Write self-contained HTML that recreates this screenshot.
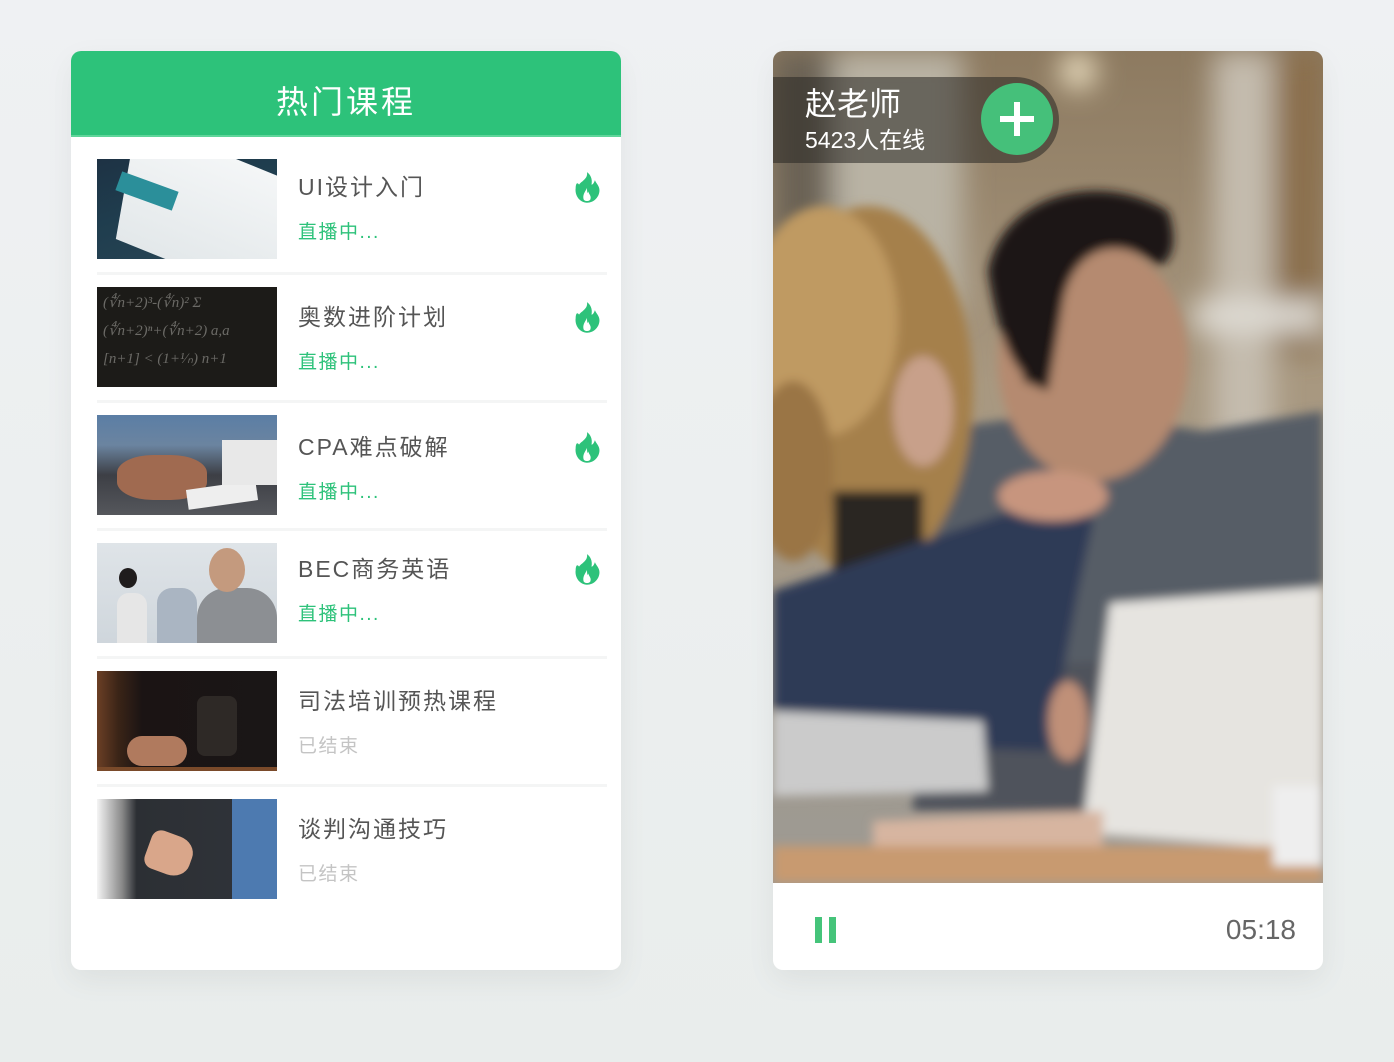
<!DOCTYPE html>
<html><head><meta charset="utf-8"><style>
*{margin:0;padding:0;box-sizing:border-box}
body{width:1394px;height:1062px;background:linear-gradient(180deg,#eff1f3,#e9edec);position:relative;overflow:hidden;font-family:"Liberation Sans","Noto Sans CJK SC",sans-serif}
.card{position:absolute;top:51px;width:550px;height:919px;background:#fff;border-radius:10px;overflow:hidden;box-shadow:0 10px 30px rgba(0,0,0,.06)}
#l{left:71px}#r{left:773px}
.hd{height:86px;background:#2dc27a;color:#fff;font-size:32px;letter-spacing:3px;text-align:center;line-height:102px;border-bottom:2px solid #5fd59a}
.th{position:absolute;left:26px;width:180px;height:100px;overflow:hidden}
.t{position:absolute;left:227px;font-size:23px;color:#555;letter-spacing:2px;line-height:28px;white-space:nowrap}
.s{position:absolute;left:227px;font-size:19px;letter-spacing:1.5px;line-height:24px;color:#2dc27a}
.s.e{color:#c4c4c4}
.sep{position:absolute;left:26px;width:510px;height:3px;background:#f4f5f5}
.fl{position:absolute;left:500px;width:32px;height:34px}
</style></head><body>
<div class="card" id="l">
<div class="hd">热门课程</div>
<div class="th" style="top:108px;background:linear-gradient(160deg,#1e3244 0%,#1f3d4e 40%,#2a4656 100%)">
<div style="position:absolute;top:-40px;width:240px;height:120px;background:linear-gradient(180deg,#f4f6f7,#e3e8ea);transform:skew(-10deg,22deg);transform-origin:0 0;left:40px"></div>
<div style="position:absolute;left:20px;top:22px;width:60px;height:20px;background:#2b8f9a;transform:rotate(20deg)"></div>
</div>
<div class="t" style="top:122px">UI设计入门</div>
<div class="s" style="top:170px">直播中...</div>
<div class="sep" style="top:221px"></div>
<div class="th" style="top:236px;background:#1c1b18;color:#6b6a66;font:italic 15px 'Liberation Serif',serif;line-height:28px;padding:2px 6px;white-space:nowrap">(∜n+2)³-(∜n)² Σ<br>(∜n+2)ⁿ+(∜n+2) a,a<br>[n+1] &lt; (1+¹⁄ₙ) n+1</div>
<div class="t" style="top:252px">奥数进阶计划</div>
<div class="s" style="top:300px">直播中...</div>
<div class="sep" style="top:349px"></div>
<div class="th" style="top:364px;background:linear-gradient(180deg,#5b7ea5 0%,#6b84a0 30%,#3d3f45 60%,#55575c 100%)">
<div style="position:absolute;left:20px;top:40px;width:90px;height:45px;border-radius:40%;background:#a06a50"></div>
<div style="position:absolute;left:90px;top:70px;width:70px;height:20px;background:#eee;transform:rotate(-8deg)"></div>
<div style="position:absolute;left:125px;top:25px;width:55px;height:45px;background:#e8e8e8"></div>
</div>
<div class="t" style="top:382px">CPA难点破解</div>
<div class="s" style="top:430px">直播中...</div>
<div class="sep" style="top:477px"></div>
<div class="th" style="top:492px;background:linear-gradient(180deg,#dfe4e8,#cfd6dc)">
<div style="position:absolute;left:100px;top:45px;width:80px;height:60px;border-radius:30px 30px 0 0;background:#8c8f93"></div>
<div style="position:absolute;left:112px;top:5px;width:36px;height:44px;border-radius:50%;background:#c49a7e"></div>
<div style="position:absolute;left:60px;top:45px;width:40px;height:55px;background:#aab5c2;border-radius:15px 15px 0 0"></div>
<div style="position:absolute;left:20px;top:50px;width:30px;height:50px;background:#e6e6e6;border-radius:12px 12px 0 0"></div>
<div style="position:absolute;left:22px;top:25px;width:18px;height:20px;background:#1f1c1c;border-radius:50%"></div>
</div>
<div class="t" style="top:504px">BEC商务英语</div>
<div class="s" style="top:552px">直播中...</div>
<div class="sep" style="top:605px"></div>
<div class="th" style="top:620px;background:linear-gradient(90deg,#6b3f25 0%,#3a2417 12%,#1b1414 25%,#1a1616 100%)">
<div style="position:absolute;left:100px;top:25px;width:40px;height:60px;background:#2e2926;border-radius:8px"></div>
<div style="position:absolute;left:30px;top:65px;width:60px;height:30px;background:#b07a5e;border-radius:15px"></div>
<div style="position:absolute;left:0;top:96px;width:180px;height:4px;background:#7a4a2a"></div>
</div>
<div class="t" style="top:636px">司法培训预热课程</div>
<div class="s e" style="top:684px">已结束</div>
<div class="sep" style="top:733px"></div>
<div class="th" style="top:748px;background:linear-gradient(90deg,#f4f4f4 0%,#888 14%,#2c2f34 22%,#30343a 100%)">
<div style="position:absolute;left:135px;top:0;width:45px;height:100px;background:#4d7ab0"></div>
<div style="position:absolute;left:50px;top:35px;width:45px;height:40px;background:#d9a68a;border-radius:10px 40% 40% 10px;transform:rotate(20deg)"></div>
</div>
<div class="t" style="top:764px">谈判沟通技巧</div>
<div class="s e" style="top:812px">已结束</div>
<svg class="fl" style="top:120px" viewBox="0 0 28 30"><path d="M14 1C15 7 9 9 7 12C5 9 4 12 4 15C3 22 8 28 14 28C20 28 25 23 25 17C25 13 22 11 21 8C20 11 19 12 18 12C19 7 17 3 14 1Z" fill="#2dc27a"/><path d="M14 15C12 19 10 21 11 25C12 27 16 27 17 25C18 22 16 21 15 18C15 20 14 20 14 15Z" fill="#fff"/></svg>
<svg class="fl" style="top:250px" viewBox="0 0 28 30"><path d="M14 1C15 7 9 9 7 12C5 9 4 12 4 15C3 22 8 28 14 28C20 28 25 23 25 17C25 13 22 11 21 8C20 11 19 12 18 12C19 7 17 3 14 1Z" fill="#2dc27a"/><path d="M14 15C12 19 10 21 11 25C12 27 16 27 17 25C18 22 16 21 15 18C15 20 14 20 14 15Z" fill="#fff"/></svg>
<svg class="fl" style="top:380px" viewBox="0 0 28 30"><path d="M14 1C15 7 9 9 7 12C5 9 4 12 4 15C3 22 8 28 14 28C20 28 25 23 25 17C25 13 22 11 21 8C20 11 19 12 18 12C19 7 17 3 14 1Z" fill="#2dc27a"/><path d="M14 15C12 19 10 21 11 25C12 27 16 27 17 25C18 22 16 21 15 18C15 20 14 20 14 15Z" fill="#fff"/></svg>
<svg class="fl" style="top:502px" viewBox="0 0 28 30"><path d="M14 1C15 7 9 9 7 12C5 9 4 12 4 15C3 22 8 28 14 28C20 28 25 23 25 17C25 13 22 11 21 8C20 11 19 12 18 12C19 7 17 3 14 1Z" fill="#2dc27a"/><path d="M14 15C12 19 10 21 11 25C12 27 16 27 17 25C18 22 16 21 15 18C15 20 14 20 14 15Z" fill="#fff"/></svg>
</div>

<div class="card" id="r">
<svg width="550" height="832" style="position:absolute;left:0;top:0" viewBox="0 0 550 832">
<defs>
<linearGradient id="bg" x1="0" y1="0" x2="0" y2="1"><stop offset="0" stop-color="#8d7a60"/><stop offset=".4" stop-color="#a89880"/><stop offset="1" stop-color="#9d9a94"/></linearGradient>
<filter id="b"><feGaussianBlur stdDeviation="5"/></filter>
<filter id="b2"><feGaussianBlur stdDeviation="14"/></filter>
</defs>
<rect width="550" height="832" fill="url(#bg)"/>
<g filter="url(#b2)">
<rect x="0" y="0" width="60" height="300" fill="#6a6255"/>
<rect x="60" y="0" width="130" height="260" fill="#b9b3a4"/>
<rect x="440" y="0" width="60" height="420" fill="#c4bcae"/>
<rect x="500" y="0" width="50" height="300" fill="#8a6e4c"/>
<circle cx="305" cy="20" r="18" fill="#f2e6c8"/>
<rect x="420" y="250" width="130" height="30" fill="#e0ddd6"/>
</g>
<g filter="url(#b)">
<rect x="140" y="520" width="410" height="240" fill="#4f535b"/>
<path d="M150 380 L300 360 L430 380 L550 360 L550 600 L140 620Z" fill="#575d66"/>
<ellipse cx="95" cy="340" rx="105" ry="185" fill="#a5804c"/>
<ellipse cx="50" cy="270" rx="75" ry="115" fill="#bf9a62"/>
<ellipse cx="20" cy="420" rx="40" ry="90" fill="#9a7444"/>
<ellipse cx="150" cy="360" rx="30" ry="55" fill="#c8a08a"/>
<rect x="60" y="440" width="90" height="100" fill="#2a2624"/>
<ellipse cx="320" cy="310" rx="95" ry="120" fill="#b58a70"/>
<path d="M215 220 C230 140 330 120 395 160 C405 190 400 210 385 215 C340 180 300 200 290 250 L265 330 C245 330 225 290 215 220Z" fill="#1b1817"/>
<path d="M250 200 L250 330 L275 340 L290 250Z" fill="#1b1817"/>
<path d="M0 540 L300 440 L320 470 L305 540 L275 700 L0 690Z" fill="#2f3a56"/>
<ellipse cx="280" cy="445" rx="55" ry="25" fill="#c7957e"/>
<path d="M0 660 L210 670 L215 740 L0 745Z" fill="#cbcbcb"/>
<path d="M337 552 L550 536 L550 800 L309 782Z" fill="#e6e4e0"/>
<ellipse cx="295" cy="670" rx="20" ry="40" fill="#c09078"/>
<path d="M100 770 L330 760 L330 810 L100 800Z" fill="#d7b5a0"/>
<rect x="0" y="795" width="550" height="37" fill="#c89a70"/>
<rect x="500" y="735" width="50" height="80" fill="#eeeeee"/>
</g>
</svg>
<div style="position:absolute;left:0;top:26px;width:286px;height:86px;background:rgba(40,38,34,.55);border-radius:0 43px 43px 0"></div>
<div style="position:absolute;left:32px;top:33px;color:#fff;font-size:32px;line-height:40px">赵老师</div>
<div style="position:absolute;left:32px;top:74px;color:#fff;font-size:23px;line-height:30px">5423人在线</div>
<div style="position:absolute;left:208px;top:32px;width:72px;height:72px;border-radius:50%;background:#45c07a"></div>
<div style="position:absolute;left:227px;top:65px;width:34px;height:6px;background:#fff"></div>
<div style="position:absolute;left:241px;top:51px;width:6px;height:34px;background:#fff"></div>
<div style="position:absolute;left:42px;top:866px;width:7px;height:26px;background:#45c47a"></div>
<div style="position:absolute;left:56px;top:866px;width:7px;height:26px;background:#45c47a"></div>
<div style="position:absolute;right:27px;top:862px;font-size:28px;color:#666;line-height:34px">05:18</div>
</div>
</body></html>
